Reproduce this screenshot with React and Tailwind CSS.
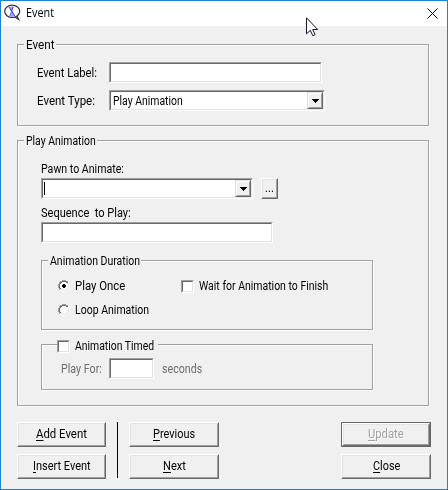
import { useLayoutEffect, useRef } from "react";

const SUNKEN =
  "border border-t-[#a0a0a0] border-l-[#a0a0a0] border-b-white border-r-white bg-white shrink-0";
const SUNKEN_INNER =
  "h-full w-full border border-t-[#696969] border-l-[#696969] border-b-[#e3e3e3] border-r-[#e3e3e3]";

// Text condensed or widened to a fixed pixel width.
function Label({ w, className = "", children }) {
  const box = useRef(null);
  const ref = useRef(null);
  useLayoutEffect(() => {
    const natural = ref.current.offsetWidth;
    box.current.style.width = `${w}px`;
    ref.current.style.transform = `scaleX(${w / natural})`;
  }, [w]);
  return (
    <span className={`block h-3.5 shrink-0 leading-[14px] whitespace-pre ${className}`}>
      <span ref={box} className="block">
        <span ref={ref} className="inline-block origin-left">
          {children}
        </span>
      </span>
    </span>
  );
}

function Group({ className = "", children }) {
  return (
    <section
      className={`flex flex-col items-start border border-[#a0a0a0] shadow-[1px_1px_0_#fff,inset_1px_1px_0_#fff] ${className}`}
    >
      {children}
    </section>
  );
}

function Field({ className = "" }) {
  return (
    <div className={`${SUNKEN} h-[21px] ${className}`}>
      <div className={SUNKEN_INNER} />
    </div>
  );
}

function Combo({ className = "", children }) {
  return (
    <div className={`${SUNKEN} h-[21px] ${className}`}>
      <div className={`${SUNKEN_INNER} flex justify-between`}>
        {children}
        <div className="h-[17px] w-4 shrink-0 border border-t-[#e3e3e3] border-l-[#e3e3e3] border-r-[#696969] border-b-[#696969] bg-[#f0f0f0]">
          <div className="flex h-full w-full justify-center border border-t-white border-l-white border-r-[#a0a0a0] border-b-[#a0a0a0] pt-[5px]">
            <svg width="7" height="4" viewBox="0 0 7 4" shapeRendering="crispEdges">
              <path d="M0 0h7v1H0zM1 1h5v1H1zM2 2h3v1H2zM3 3h1v1H3z" />
            </svg>
          </div>
        </div>
      </div>
    </div>
  );
}

function Check() {
  return (
    <div className={`${SUNKEN} mt-px h-[13px] w-[13px]`}>
      <div className={SUNKEN_INNER} />
    </div>
  );
}

function Radio({ checked }) {
  return (
    <svg className="mt-px shrink-0" width="12" height="12" viewBox="0 0 12 12" shapeRendering="crispEdges">
      <path fill="#fff" d="M4 1h4v1h2v2h1v4h-1v2H8v1H4v-1H2V8H1V4h1V2h2z" />
      <path fill="#a0a0a0" d="M4 0h4v1H4zM2 1h2v1H2zM8 1h2v1H8zM1 2h1v2H1zM0 4h1v4H0zM1 8h1v2H1z" />
      <path fill="#696969" d="M4 1h4v1H4zM2 2h2v1H2zM8 2h2v1H8zM2 3h1v1H2zM1 4h1v4H1zM2 8h1v1H2z" />
      <path fill="#e3e3e3" d="M9 3h1v1H9zM10 4h1v4h-1zM9 8h1v1H9zM8 9h2v1H8zM4 10h4v1H4zM2 9h2v1H2z" />
      <path fill="#fff" d="M10 2h1v2h-1zM11 4h1v4h-1zM10 8h1v2h-1zM8 10h2v1H8zM4 11h4v1H4zM2 10h2v1H2z" />
      {checked && <path d="M5 4h2v1h1v2H7v1H5V7H4V5h1z" />}
    </svg>
  );
}

function Button({ className = "h-[25px] w-[90px]", children }) {
  return (
    <button
      className={`block shrink-0 border border-t-white border-l-white border-r-[#696969] border-b-[#696969] ${className}`}
    >
      <span className="flex h-full w-full justify-center border border-t-[#e3e3e3] border-l-[#e3e3e3] border-r-[#a0a0a0] border-b-[#a0a0a0] pt-[3px] text-left">
        {children}
      </span>
    </button>
  );
}

function Key({ children }) {
  return <span className="underline decoration-1 underline-offset-2">{children}</span>;
}

export default function App() {
  return (
    <div className="relative h-[490px] w-[448px] overflow-hidden border border-[#1883d7] bg-[#f0f0f0] font-[Roboto,Arial,sans-serif] text-[12.5px] text-black">
      <header className="flex h-[25px] items-start bg-white pl-[3px]">
        <svg className="mt-[3px] shrink-0" width="17" height="17" viewBox="0 0 17 17">
          <path
            d="M10.5 12.8L14.6 15.4 12.8 11.8"
            fill="#fff"
            stroke="#333"
            strokeWidth="1.2"
          />
          <ellipse cx="8.2" cy="7.3" rx="7.5" ry="6.2" fill="#fff" stroke="#333" strokeWidth="1.2" />
          <path d="M5 3l4.5-.8-1 4.3 3 6.5H5l2-5.5z" fill="#a4a4ff" />
          <path d="M5 3l2.5 4 4 6M9 3L7.8 6.5" fill="none" stroke="#3c3cf0" strokeWidth="1" />
          <path d="M7.5 8L5.5 12.5" stroke="#7070ff" strokeWidth="1" />
        </svg>
        <Label w={28} className="mt-[5px] ml-[5px] font-['Open_Sans',sans-serif] text-[12px]">
          Event
        </Label>
        <svg className="mt-[7px] mr-[9px] ml-auto shrink-0" width="11" height="11" viewBox="0 0 11 11">
          <path d="M.5.5l10 10M10.5.5l-10 10" stroke="#000" strokeWidth="1" />
        </svg>
      </header>

      <main className="flex flex-col items-start pt-[18px] pl-4">
        <Group className="h-[82px] w-[412px]">
          <Label w={29} className="-mt-[7px] ml-[6px] bg-[#f0f0f0] pr-[1px] pl-[2px]">
            Event
          </Label>
          <div className="mt-[10px] ml-[19px] flex">
            <div className="w-[72px] pt-1">
              <Label w={60}>Event Label:</Label>
            </div>
            <Field className="w-[213px]" />
          </div>
          <div className="mt-[7px] ml-[19px] flex">
            <div className="w-[72px] pt-1">
              <Label w={58}>Event Type:</Label>
            </div>
            <Combo className="w-[216px]">
              <Label w={70} className="mt-[2px] ml-[2px]">
                Play Animation
              </Label>
            </Combo>
          </div>
        </Group>

        <Group className="mt-[14px] h-[266px] w-[412px]">
          <Label w={70} className="-mt-[7px] ml-[6px] bg-[#f0f0f0] pr-[1px] pl-[2px]">
            Play Animation
          </Label>
          <div className="flex flex-col items-start pl-[23px]">
            <Label w={83} className="mt-[14px]">
              Pawn to Animate:
            </Label>
            <div className="mt-[2px] flex gap-2">
              <Combo className="w-[212px]">
                <div className="mt-[2px] ml-px h-[13px] w-px bg-black" />
              </Combo>
              <Button className="h-[21px] w-[17px]">
                <Label w={9} className="-mt-[2px]">
                  ...
                </Label>
              </Button>
            </div>
            <Label w={90} className="mt-[7px]">
              {"Sequence  to Play:"}
            </Label>
            <Field className="mt-[2px] w-[232px]" />

            <Group className="mt-[17px] h-[70px] w-[332px]">
              <Label w={90} className="-mt-[7px] ml-[6px] bg-[#f0f0f0] pr-[1px] pl-[2px]">
                Animation Duration
              </Label>
              <div className="mt-[11px] ml-4 flex">
                <div className="flex w-[123px] gap-[5px]">
                  <Radio checked />
                  <Label w={50}>Play Once</Label>
                </div>
                <div className="flex gap-[5px]">
                  <Check />
                  <Label w={129}>Wait for Animation to Finish</Label>
                </div>
              </div>
              <div className="mt-[10px] ml-4 flex gap-[5px]">
                <Radio />
                <Label w={74}>Loop Animation</Label>
              </div>
            </Group>

            <Group className="mt-[14px] h-[46px] w-[332px]">
              <div className="-mt-[6px] ml-[15px] flex w-[101px] gap-[5px] bg-[#f0f0f0]">
                <Check />
                <Label w={79}>Animation Timed</Label>
              </div>
              <div className="mt-[5px] ml-[19px] flex text-[#6d6d6d]">
                <div className="w-12 pt-1">
                  <Label w={41}>Play For:</Label>
                </div>
                <Field className="w-[45px]" />
                <Label w={40} className="mt-1 ml-2">
                  seconds
                </Label>
              </div>
            </Group>
          </div>
        </Group>

        <footer className="mt-4 flex w-[414px] items-start">
          <div className="flex flex-col gap-[7px]">
            <Button className="h-[25px] w-[89px]">
              <Label w={51}>
                <Key>A</Key>dd Event
              </Label>
            </Button>
            <Button className="h-[25px] w-[89px]">
              <Label w={58}>
                <Key>I</Key>nsert Event
              </Label>
            </Button>
          </div>
          <div className="mx-[11px] h-14 w-px bg-black" />
          <div className="flex flex-col gap-[7px]">
            <Button>
              <Label w={42}>
                <Key>P</Key>revious
              </Label>
            </Button>
            <Button>
              <Label w={23}>
                <Key>N</Key>ext
              </Label>
            </Button>
          </div>
          <div className="ml-auto flex flex-col gap-[7px]">
            <div className="border border-[#696969]">
              <Button className="h-[23px] w-[88px] text-[#a0a0a0] [text-shadow:1px_1px_0_#fff]">
                <Label w={36} className="-mt-px">
                  <Key>U</Key>pdate
                </Label>
              </Button>
            </div>
            <Button>
              <Label w={27}>
                <Key>C</Key>lose
              </Label>
            </Button>
          </div>
        </footer>
      </main>

      <svg className="absolute top-4 left-[305px]" width="13" height="20" viewBox="0 0 13 20">
        <path
          d="M.5.8v16l3.8-3.5 2.5 5.4 2.3-1-2.4-5.2h5z"
          fill="#fff"
          stroke="#15152a"
          strokeWidth="1"
        />
      </svg>
    </div>
  );
}
